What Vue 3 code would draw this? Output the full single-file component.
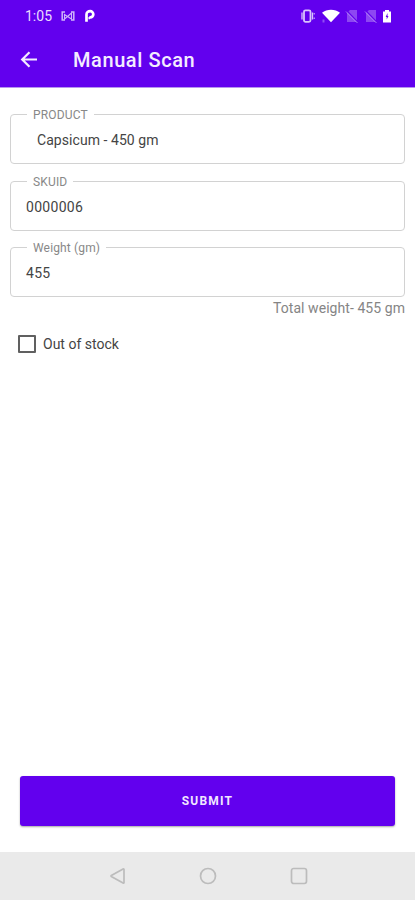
<script setup>
import { ref } from 'vue'

const product = ref('Capsicum - 450 gm')
const skuid = ref('0000006')
const weight = ref('455')
const outOfStock = ref(false)
</script>

<template>
  <div class="screen">
    <header class="header">
      <div class="status-bar">
        <span class="clock">1:05</span>
        <svg class="icon-cast" width="14" height="12" viewBox="0 0 14 12" fill="none" stroke="currentColor" stroke-width="1.5">
          <path d="M4 2H1.200v8H4M10 2h2.800v8H10" />
          <path d="M3.500 4.500L6.500 6.500l4-3.500v6l-4-2.500-3 2.500z" stroke-width="1.1" />
        </svg>
        <svg class="icon-p" width="12" height="14" viewBox="0 0 12 14" fill="none" stroke="currentColor">
          <path d="M2.500 12.800V5.500C2.500 3.200 4.200 2.200 6.200 2.200A3.100 3.100 0 0 1 6.200 8.400H5.400" stroke-width="2.700" />
          <path d="M5.200 10.200V8" stroke-width="1.5" />
        </svg>
        <div class="status-right">
          <svg width="16" height="16" viewBox="0 0 16 16" fill="none" stroke="currentColor">
            <rect x="4" y="2.300" width="6.500" height="11.500" rx="1.500" stroke-width="1.800" />
            <path d="M2 4.500v7M12.500 4.500v7" stroke-width="1.300" />
            <path d="M14.200 5v1.500M14.200 9.500V11" stroke-width="1" />
          </svg>
          <svg class="icon-wifi" width="20" height="16" viewBox="0 0 20 16" fill="currentColor">
            <path d="M1 4.800C5.800 .6 14.200 .6 19 4.800L10 14.300z" />
            <path d="M1.500 11.500h2v3h-2z" opacity=".3" />
          </svg>
          <svg v-for="n in 2" :key="n" class="icon-sim" width="14" height="16" viewBox="0 0 14 16">
            <path d="M5 2h7v12H2V5z" fill="currentColor" opacity=".28" />
            <path d="M1.500 2.500l11.500 12" stroke="#6200ee" stroke-width="1.500" />
            <path d="M1 3.500l11.500 11.500" stroke="currentColor" stroke-width="1" opacity=".45" />
          </svg>
          <svg class="icon-battery" width="10" height="16" viewBox="0 0 10 16">
            <path d="M3 2h4v1.500h2v11H1v-11h2z" fill="currentColor" />
            <path d="M5.500 5v3h1L4.700 11.500V9H3.700z" fill="#6200ee" />
          </svg>
        </div>
      </div>
      <div class="toolbar">
        <svg class="back" width="24" height="24" viewBox="0 0 24 24" fill="none" stroke="currentColor" stroke-width="2.200">
          <path d="M20 11.500H5M12.500 4.200L5.200 11.500l7.300 7.300" />
        </svg>
        <h1>Manual Scan</h1>
      </div>
    </header>

    <main class="form">
      <fieldset class="field">
        <legend>PRODUCT</legend>
        <div class="value product">{{ product }}</div>
      </fieldset>
      <fieldset class="field">
        <legend>SKUID</legend>
        <div class="value">{{ skuid }}</div>
      </fieldset>
      <fieldset class="field">
        <legend>Weight (gm)</legend>
        <div class="value">{{ weight }}</div>
      </fieldset>
      <p class="total">Total weight- {{ weight }} gm</p>
      <div class="check" @click="outOfStock = !outOfStock">
        <span class="box" :class="{ checked: outOfStock }"></span>
        <span>Out of stock</span>
      </div>
      <button class="submit">SUBMIT</button>
    </main>

    <nav class="nav-bar">
      <svg width="18" height="18" viewBox="0 0 18 18">
        <path d="M16 2.400v13.200a.6.6 0 0 1-.9.500L3.300 9.500a.6.6 0 0 1 0-1l11.800-6.600a.6.6 0 0 1 .9.500z" />
      </svg>
      <svg width="18" height="18" viewBox="0 0 18 18">
        <circle cx="9" cy="9" r="7.500" />
      </svg>
      <svg width="18" height="18" viewBox="0 0 18 18">
        <rect x="1.500" y="1.500" width="15" height="15" rx="2.200" />
      </svg>
    </nav>
  </div>
</template>

<style>
body {
  margin: 0;
  background: #fff;
}
</style>

<style scoped>
.screen {
  display: flex;
  flex-direction: column;
  height: 100vh;
  background: #fff;
  color: #444;
  font-family: Roboto, sans-serif;
}
.header {
  height: 87px;
  background: #6200ee;
  color: #fff;
  border-bottom: 1px solid #b595ee;
}
.status-bar {
  display: flex;
  align-items: center;
  height: 32px;
  padding: 0 23px 0 25px;
}
.clock {
  width: 28px;
  font-size: 14px;
  color: #e9dcff;
}
.icon-cast {
  margin-left: 8px;
  color: #d0b5fa;
}
.icon-p { margin-left: 9px; }
.status-right {
  display: flex;
  align-items: center;
  margin-left: auto;
}
.status-right svg:first-child { color: #d9c4fb; }
.icon-wifi { margin-left: 5px; }
.icon-sim { margin-left: 4px; }
.icon-sim + .icon-sim { margin-left: 5px; }
.icon-battery { margin-left: 4px; }
.toolbar {
  display: flex;
  align-items: center;
  height: 55px;
  padding-left: 17px;
}
.back { color: #f4ecff; }
h1 {
  margin: 0 0 0 32px;
  font-size: 20px;
  font-weight: 500;
  letter-spacing: 0.580px;
  color: #f4ecff;
}
.form {
  flex: 1;
  display: flex;
  flex-direction: column;
  padding: 19px 10px 26px;
}
.field {
  box-sizing: border-box;
  height: 57px;
  min-width: 0;
  margin: 0 0 9.500px;
  padding: 0 15px;
  border: 1px solid #d2d2d2;
  border-radius: 4px;
}
legend {
  height: 15px;
  margin-left: 1px;
  padding: 0 6px;
  font-size: 12px;
  line-height: 17px;
  letter-spacing: 0.15px;
  color: #888;
}
.value {
  padding-top: 10px;
  font-size: 14px;
  line-height: 17px;
  letter-spacing: 0.3px;
}
.product {
  padding-left: 11px;
  letter-spacing: 0.060px;
}
.total {
  margin: -8px 0 0;
  font-size: 14px;
  line-height: 18px;
  letter-spacing: 0.060px;
  text-align: right;
  color: #858585;
}
.check {
  display: flex;
  align-items: center;
  gap: 7px;
  margin: 18px 0 0 8px;
  font-size: 14px;
  line-height: 18px;
}
.box {
  box-sizing: border-box;
  width: 18px;
  height: 18px;
  border: 2px solid #606060;
  border-radius: 1px;
}
.checked { background: #6200ee; }
.submit {
  height: 50px;
  margin: auto 10px 0;
  padding: 0;
  border: 0;
  border-radius: 3px;
  background: #6200ee;
  color: #f1e7ff;
  font: 700 12px Roboto, sans-serif;
  letter-spacing: 1.200px;
  box-shadow: 0 1px 2px rgba(0, 0, 0, 0.35);
}
.nav-bar {
  display: flex;
  align-items: center;
  justify-content: center;
  gap: 73px;
  height: 48px;
  background: #eaeaea;
}
.nav-bar svg {
  fill: none;
  stroke: #bcbcbc;
  stroke-width: 1.700;
}
</style>
